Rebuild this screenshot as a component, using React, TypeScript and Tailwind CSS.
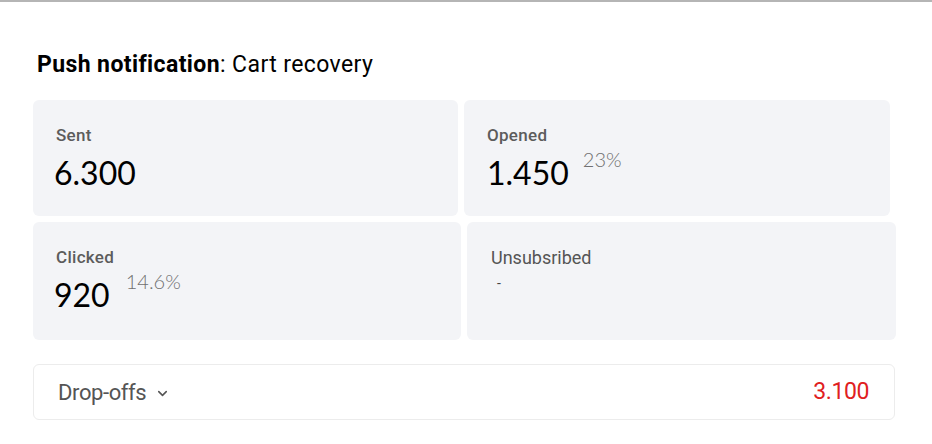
import { ChevronDown } from "lucide-react";

function StatCard({
  label,
  value,
  pct,
  className,
  shift,
}: {
  label: string;
  value: string;
  pct?: string;
  className: string;
  shift?: boolean;
}) {
  return (
    <div className={`rounded-md bg-[#f3f4f7] pt-[23px] pl-[23px] ${className}`}>
      <div className="text-[17px] font-medium text-[#5c5c5c] leading-[24px] tracking-[0.3px]">{label}</div>
      <div className="flex items-start mt-[7px]">
        <span className={`font-['Lato'] text-[32px] leading-[38px] text-black ${shift ? "-ml-[2px]" : ""}`}>
          {value}
        </span>
        {pct && (
          <span
            className={`font-['Lato'] font-light text-[20px] leading-[22px] text-[#707070] -mt-[6px] ${
              shift ? "ml-[16px]" : "ml-[14px]"
            }`}
          >
            {pct}
          </span>
        )}
      </div>
    </div>
  );
}

export default function App() {
  return (
    <div className="w-[932px] h-[444px] bg-white border-t-2 border-[#b5b5b5] font-['Roboto',sans-serif] overflow-hidden">
      <div className="pt-[48px] pl-[37px] text-[23px] leading-[30px] text-black tracking-[0.4px]">
        <span className="font-bold">Push notification</span>: Cart recovery
      </div>

      <div className="flex gap-[6px] mt-[20px] ml-[33px]">
        <StatCard label="Sent" value="6.300" shift className="w-[425px] h-[116px]" />
        <StatCard label="Opened" value="1.450" pct="23%" className="w-[426px] h-[116px]" />
      </div>

      <div className="flex gap-[6px] mt-[6px] ml-[33px]">
        <StatCard label="Clicked" value="920" pct="14.6%" shift className="w-[428px] h-[118px]" />
        <div className="w-[429px] h-[118px] rounded-md bg-[#f3f4f7] pt-[25px] pl-[24px]">
          <div className="text-[18px] leading-[22px] text-[#555]">Unsubsribed</div>
          <div className="text-[14px] leading-[16px] text-[#444] mt-[6px] pl-[6px]">-</div>
        </div>
      </div>

      <div className="ml-[33px] mt-[24px] w-[862px] h-[56px] rounded-md border border-[#ececec] bg-white flex items-center justify-between pl-[24px] pr-[25px]">
        <div className="flex items-center gap-[9px] text-[22px] text-[#555] tracking-[-0.4px]">
          <span>Drop-offs</span>
          <ChevronDown size={15} strokeWidth={2.5} className="text-[#555] mt-[2px]" />
        </div>
        <span className="text-[23px] text-[#e0201e] tracking-[-0.4px]">3.100</span>
      </div>
    </div>
  );
}
